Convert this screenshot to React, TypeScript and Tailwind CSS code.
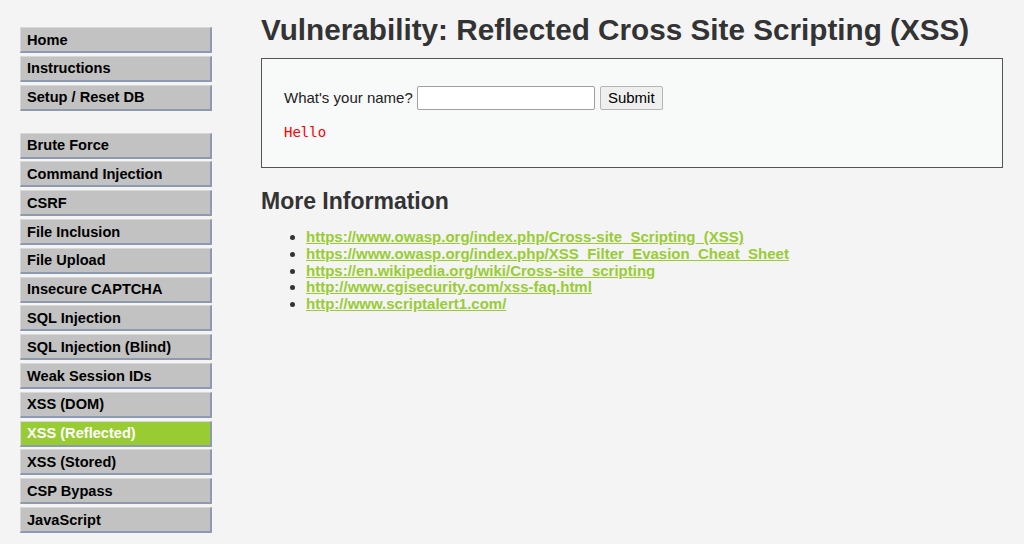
const menuTop = ["Home", "Instructions", "Setup / Reset DB"];
const menuVulns = [
  "Brute Force",
  "Command Injection",
  "CSRF",
  "File Inclusion",
  "File Upload",
  "Insecure CAPTCHA",
  "SQL Injection",
  "SQL Injection (Blind)",
  "Weak Session IDs",
  "XSS (DOM)",
  "XSS (Reflected)",
  "XSS (Stored)",
  "CSP Bypass",
  "JavaScript",
];

const links = [
  "https://www.owasp.org/index.php/Cross-site_Scripting_(XSS)",
  "https://www.owasp.org/index.php/XSS_Filter_Evasion_Cheat_Sheet",
  "https://en.wikipedia.org/wiki/Cross-site_scripting",
  "http://www.cgisecurity.com/xss-faq.html",
  "http://www.scriptalert1.com/",
];

function MenuItem({ label }: { label: string }) {
  const active = label === "XSS (Reflected)";
  return (
    <li>
      <a
        href="#"
        className={
          active
            ? "flex h-[26px] items-center border-t border-l border-b-2 border-r-2 border-t-[#d8d8d8] border-l-[#d8d8d8] border-b-[#8e9ab0] border-r-[#8e9ab0] bg-[#99cc33] pl-[6px] pt-[2px] text-[14.6px] font-bold text-white"
            : "flex h-[26px] items-center border-t border-l border-b-2 border-r-2 border-t-[#d8d8d8] border-l-[#d8d8d8] border-b-[#8e9ab0] border-r-[#8e9ab0] bg-[#c2c2c2] pl-[6px] pt-[2px] text-[14.6px] font-bold text-black"
        }
      >
        {label}
      </a>
    </li>
  );
}

export default function App() {
  return (
    <div className="flex h-[544px] w-[1024px] overflow-hidden bg-[#f4f4f4] font-['Liberation_Sans',Arial,sans-serif] text-[#333]">
      {/* Left menu */}
      <nav className="w-[212px] shrink-0 pl-[20px] pt-[27px]">
        <ul className="flex flex-col gap-[2.8px]">
          {menuTop.map((m) => (
            <MenuItem key={m} label={m} />
          ))}
        </ul>
        <ul className="mt-[22px] flex flex-col gap-[2.8px]">
          {menuVulns.map((m) => (
            <MenuItem key={m} label={m} />
          ))}
        </ul>
      </nav>

      {/* Main body */}
      <main className="ml-[49px] flex-1 pr-[21px] pt-[13px]">
        <h1 className="text-[29.7px] leading-[34px] font-bold text-[#333]">
          Vulnerability: Reflected Cross Site Scripting (XSS)
        </h1>

        <div className="mt-[11px] h-[110px] border border-[#555] bg-[#f8f9f9] px-[22px] pt-[27px]">
          <form className="flex items-center text-[15px] text-[#222]">
            <span>What's your name?</span>
            <input
              type="text"
              className="ml-[4px] h-[24px] w-[178px] rounded-[2px] border border-[#a0a0a0] bg-white"
            />
            <button
              type="button"
              className="ml-[5px] h-[24px] w-[63px] rounded-[2px] border border-[#b5b5b5] bg-[#efefef] text-[15px] text-black"
            >
              Submit
            </button>
          </form>
          <pre className="mt-[12px] font-['DejaVu_Sans_Mono',monospace] text-[14px] text-[#ff0000]">
            Hello
          </pre>
        </div>

        <h2 className="mt-[19px] text-[23px] leading-[28px] font-bold text-[#333]">
          More Information
        </h2>

        <ul className="mt-[14px] list-disc pl-[45px] text-[15px] leading-[16.8px]">
          {links.map((l) => (
            <li key={l} className="marker:text-[#333]">
              <a href="#" className="font-bold text-[#99cc33] underline">
                {l}
              </a>
            </li>
          ))}
        </ul>
      </main>
    </div>
  );
}
